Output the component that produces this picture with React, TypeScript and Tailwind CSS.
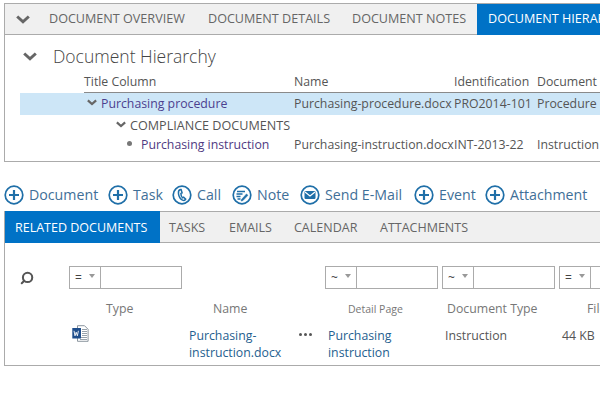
import { Search } from "lucide-react";

const font = "font-['Open_Sans','Noto_Sans',sans-serif]";

function Chevron({ className }: { className: string }) {
  return (
    <svg viewBox="0 0 14 9" className={className} fill="none" stroke="currentColor" strokeWidth="3">
      <path d="M1.2 1.5 7 6.8l5.8-5.3" />
    </svg>
  );
}

function CircleIcon({ children }: { children: React.ReactNode }) {
  return (
    <svg viewBox="0 0 20 20" className="w-5 h-5 shrink-0" fill="none" stroke="#1f6fa8">
      <circle cx="10" cy="10" r="8.8" strokeWidth="1.7" />
      {children}
    </svg>
  );
}

const plus = <path d="M10 5v10M5 10h10" strokeWidth="2.2" />;
const phone = (
  <path d="M8.6 4.6C6.8 5 6.2 6.6 6.5 8.8c.4 2.6 1.8 5.2 4 6.3 1.3.6 2.6.2 3.2-.9l-2.1-2-1.1.6c-1-1-1.6-2.9-1.6-4.4l1.2-.6-1-3.2z" strokeWidth="1.5" />
);
const note = (
  <>
    <path d="M5 6.5h8M4.5 9h6M4.5 11.5h4M5.5 14h3" strokeWidth="1.3" />
    <path d="M9.5 14.5l5-5.5 1.4 1.3-5 5.3-1.8.4z" fill="#1f6fa8" strokeWidth=".6" />
  </>
);
const mail = (
  <>
    <rect x="4.5" y="6" width="11" height="8" rx="1.2" fill="#1f6fa8" stroke="none" />
    <path d="M5 7l5 4 5-4" stroke="#fff" strokeWidth="1.2" />
  </>
);

const actions = [
  { label: "Document", icon: plus, w: "w-[104px]" },
  { label: "Task", icon: plus, w: "w-[64px]" },
  { label: "Call", icon: phone, w: "w-[60px]" },
  { label: "Note", icon: note, w: "w-[68px]" },
  { label: "Send E-Mail", icon: mail, w: "w-[114px]" },
  { label: "Event", icon: plus, w: "w-[71px]" },
  { label: "Attachment", icon: plus, w: "w-[104px]" },
];

const hierarchyCols = "grid grid-cols-[210px_160px_83px_100px] whitespace-nowrap";
const relatedCols = "grid grid-cols-[67px_117px_110px_29px_117px_117px_100px] whitespace-nowrap";

function FilterBox({ op, className }: { op: string; className: string }) {
  return (
    <div className={`flex h-[23px] border border-[#ababab] shrink-0 ${className}`}>
      <div className="w-[31px] shrink-0 border-r border-[#ababab] flex items-center justify-between pl-[5px] pr-[5px] text-[12px] text-[#444]">
        <span>{op}</span>
        <span className="border-x-[3px] border-x-transparent border-t-[4px] border-t-[#999] mb-1" />
      </div>
    </div>
  );
}

function WordIcon() {
  return (
    <svg viewBox="0 0 17 17" className="w-[17px] h-[17px]">
      <path d="M5.5.7h7l3.6 3.6v12H5.5z" fill="#fff" stroke="#7f8a94" strokeWidth=".9" />
      <path d="M10 4.5h5M10 6.5h5M10 8.5h5M10 10.5h5M8 12.5h7M8 14.5h7" stroke="#8b97a3" strokeWidth=".9" />
      <rect x=".3" y="3" width="8.7" height="10.5" fill="#1f4e8c" />
      <path d="M2 5.8l1 5 1.2-3.6 1.2 3.6 1-5" fill="none" stroke="#fff" strokeWidth=".9" />
    </svg>
  );
}

export default function App() {
  return (
    <div className={`${font} w-[600px] h-[400px] overflow-hidden bg-white pt-[3px] pl-1 text-[12.3px] text-[#555]`}>
      {/* Document panel */}
      <section className="w-[640px] h-[159px] border border-[#ababab] border-r-0">
        <div className="flex h-[31px] bg-[#f0f0f0] border-b border-[#ababab] items-stretch uppercase text-[12.6px] text-[#666] whitespace-nowrap">
          <div className="w-[44px] shrink-0 flex items-center pl-[11px] text-[#666]">
            <Chevron className="w-[14px] h-[9px]" />
          </div>
          <div className="w-[159px] shrink-0 flex items-center">Document Overview</div>
          <div className="w-[144px] shrink-0 flex items-center">Document Details</div>
          <div className="w-[125px] shrink-0 flex items-center">Document Notes</div>
          <div className="flex-1 flex items-center bg-[#0072c6] text-white pl-[11px] -mb-px">Document Hierarchy</div>
        </div>

        <div className="flex items-center h-[36px] pt-[7px] pl-[18px] gap-[16px]">
          <Chevron className="w-[14px] h-[9px] text-[#666]" />
          <h2 className="text-[17.5px] font-light text-[#444]">Document Hierarchy</h2>
        </div>

        <div className="pl-[79px] h-[22px]">
          <div className={`${hierarchyCols} h-[22px] items-center pt-[2px] border-b border-[#8a8a8a]`}>
            <span>Title Column</span>
            <span>Name</span>
            <span>Identification</span>
            <span>Document</span>
          </div>
        </div>
        <div className="ml-[15px] pl-[64px] h-[22px] bg-[#cde6f7]">
          <div className={`${hierarchyCols} h-full items-center`}>
            <div className="flex items-center gap-[4px] pl-[3px] text-[#4c3f8f]">
              <Chevron className="w-[10px] h-[7px] text-[#666] mb-1" />
              <span>Purchasing procedure</span>
            </div>
            <span>Purchasing-procedure.docx</span>
            <span>PRO2014-101</span>
            <span>Procedure</span>
          </div>
        </div>
        <div className="pl-[79px] pt-[2px]">
          <div className="flex items-center gap-[4px] h-[19px] pl-[32px] uppercase text-[12.6px]">
            <Chevron className="w-[10px] h-[7px] text-[#666] mb-1" />
            <span>Compliance Documents</span>
          </div>
          <div className={`${hierarchyCols} h-[19px] items-center`}>
            <div className="flex items-center gap-[9px] pl-[43px] text-[#4f3a82]">
              <span className="w-[5px] h-[5px] rounded-full bg-[#777] mb-1" />
              <span>Purchasing instruction</span>
            </div>
            <span>Purchasing-instruction.docx</span>
            <span>INT-2013-22</span>
            <span>Instruction</span>
          </div>
        </div>
      </section>

      {/* Actions */}
      <div className="flex items-center h-[28px] mt-[19px] text-[14.2px] text-[#3f6f98] whitespace-nowrap">
        {actions.map((a) => (
          <div key={a.label} className={`flex items-center gap-[5px] shrink-0 ${a.w}`}>
            <CircleIcon>{a.icon}</CircleIcon>
            <span>{a.label}</span>
          </div>
        ))}
      </div>

      {/* Related panel */}
      <section className="w-[640px] h-[155px] mt-[2px] border border-[#ababab] border-r-0">
        <div className="flex h-[31px] bg-[#f0f0f0] border-b border-[#ababab] uppercase text-[12.5px] text-[#666] whitespace-nowrap">
          <div className="w-[155px] shrink-0 bg-[#0072c6] text-white flex items-center pl-[10px] -mt-px -mb-px pt-[3px]">Related Documents</div>
          <div className="w-[59px] shrink-0 flex items-center pl-[9px] pt-[2px]">Tasks</div>
          <div className="w-[65px] shrink-0 flex items-center pl-[10px] pt-[2px]">Emails</div>
          <div className="w-[86px] shrink-0 flex items-center pl-[10px] pt-[2px]">Calendar</div>
          <div className="flex items-center pl-[10px] pt-[2px]">Attachments</div>
        </div>

        <div className="flex items-center h-[23px] mt-[23px]">
          <div className="w-[64px] shrink-0 pl-[15px] text-[#555]">
            <Search className="w-[14px] h-[14px] -scale-x-100" strokeWidth={3.5} />
          </div>
          <FilterBox op="=" className="w-[113px]" />
          <div className="w-[143px] shrink-0" />
          <FilterBox op="~" className="w-[113px]" />
          <div className="w-[4px] shrink-0" />
          <FilterBox op="~" className="w-[113px]" />
          <div className="w-[4px] shrink-0" />
          <FilterBox op="=" className="w-[113px]" />
        </div>

        <div className={`${relatedCols} mt-[11px] text-[#777]`}>
          <span />
          <span className="pl-[34px] h-[22px]">Type</span>
          <span className="pl-[24px]">Name</span>
          <span />
          <span className="pl-[20px] text-[10.5px] leading-[19px]">Detail Page</span>
          <span className="pl-[2px]">Document Type</span>
          <span className="pl-[25px]">File Size</span>
        </div>
        <div className={`${relatedCols} leading-[16.5px] pt-[6px]`}>
          <div className="pl-[67px] col-span-2 -mt-[3px]"><WordIcon /></div>
          <a className="text-[#25608f]">Purchasing-<br />instruction.docx</a>
          <div className="flex gap-[2px] pt-[5px] h-[8px]">
            <span className="w-[3px] h-[3px] rounded-full bg-[#555]" />
            <span className="w-[3px] h-[3px] rounded-full bg-[#555]" />
            <span className="w-[3px] h-[3px] rounded-full bg-[#555]" />
          </div>
          <a className="text-[#25608f]">Purchasing<br />instruction</a>
          <span>Instruction</span>
          <span>44 KB</span>
        </div>
      </section>
    </div>
  );
}
